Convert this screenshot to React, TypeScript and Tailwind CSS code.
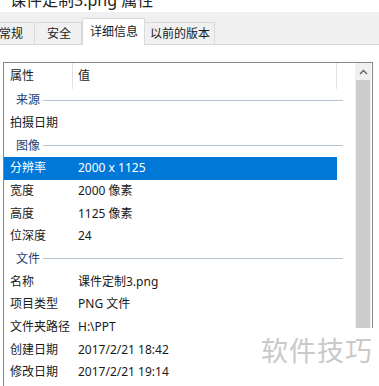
const rows: { type: "group" | "row"; label: string; value?: string; selected?: boolean }[] = [
  { type: "group", label: "来源" },
  { type: "row", label: "拍摄日期", value: "" },
  { type: "group", label: "图像" },
  { type: "row", label: "分辨率", value: "2000 x 1125", selected: true },
  { type: "row", label: "宽度", value: "2000 像素" },
  { type: "row", label: "高度", value: "1125 像素" },
  { type: "row", label: "位深度", value: "24" },
  { type: "group", label: "文件" },
  { type: "row", label: "名称", value: "课件定制3.png" },
  { type: "row", label: "项目类型", value: "PNG 文件" },
  { type: "row", label: "文件夹路径", value: "H:\\PPT" },
  { type: "row", label: "创建日期", value: "2017/2/21 18:42" },
  { type: "row", label: "修改日期", value: "2017/2/21 19:14" },
];

const tabs = [
  { label: "常规", w: "w-[47px]", pl: "pl-[10px]" },
  { label: "安全", w: "w-[47px]", pl: "pl-[12px]" },
  { label: "详细信息", w: "w-[63px]", pl: "pl-[7px]", active: true },
  { label: "以前的版本", w: "w-[70px]", pl: "pl-[5px]" },
];

export default function App() {
  return (
    <div className="relative w-[379px] h-[386px] overflow-hidden bg-white text-[#1a1a1a] font-['Noto_Sans','Noto_Sans_CJK_SC',sans-serif]">
      {/* window title, cut off at the top */}
      <div className="h-[12px] overflow-hidden">
        <div className="-mt-[10px] pl-[10px] text-[16px] leading-[20px] text-[#222]">课件定制3.png 属性</div>
      </div>

      {/* tab strip */}
      <div className="h-[33px] bg-[#f0f0f0] border-b border-[#d9d9d9] flex items-end">
        <div className="flex items-end -ml-[12px]">
          {tabs.map((t) =>
            t.active ? (
              <div
                key={t.label}
                className={`${t.w} ${t.pl} h-[27px] -mb-px bg-white border border-b-0 border-[#d9d9d9] text-[12px] leading-[24px] pt-[1px]`}
              >
                {t.label}
              </div>
            ) : (
              <div
                key={t.label}
                className={`${t.w} ${t.pl} h-[22px] bg-[#f0f0f0] border border-b-0 border-l-0 first:border-l border-[#d9d9d9] text-[12px] leading-[22px]`}
              >
                {t.label}
              </div>
            )
          )}
        </div>
      </div>

      {/* list view */}
      <div className="mt-[17px] ml-[3px] w-[370px] h-[330px] border border-b-0 border-[#828790] flex">
        <div className="w-[351px]">
          <div className="flex h-[26px] text-[12px]">
            <div className="w-[69px] pl-[6px] leading-[26px] border-r border-[#e3e3e3]">属性</div>
            <div className="w-[264px] pl-[5px] leading-[26px] border-r border-[#e3e3e3]">值</div>
          </div>
          {rows.map((r, i) =>
            r.type === "group" ? (
              <div key={i} className="h-[22.67px] flex items-center text-[12px]">
                <span className="pl-[12px] text-[#1e3f75]">{r.label}</span>
                <div className="flex-1 h-px bg-[#b9c4d3] ml-[3px] mr-[12px]" />
              </div>
            ) : (
              <div
                key={i}
                className={`h-[22.67px] w-[333px] flex items-center text-[12px] ${
                  r.selected ? "bg-[#0078d7] text-white" : ""
                }`}
              >
                <span className="w-[74px] pl-[6px] whitespace-nowrap">{r.label}</span>
                <span className="whitespace-nowrap">{r.value}</span>
              </div>
            )
          )}
        </div>
        {/* scrollbar */}
        <div className="w-[16px] flex flex-col">
          <div className="h-[17px] bg-[#f0f0f0] flex items-center justify-center">
            <svg width="9" height="6" viewBox="0 0 9 6">
              <path d="M1 5 L4.5 1.5 L8 5" stroke="#606060" strokeWidth="1.4" fill="none" />
            </svg>
          </div>
          <div className="flex-1 bg-[#f0f0f0] px-[1px]">
            <div className="h-full bg-[#cdcdcd]" />
          </div>
        </div>
      </div>

      {/* watermark */}
      <div className="absolute left-[232px] top-[328px] right-0 bottom-0 bg-white">
        <div className="absolute right-[6px] top-[4px] text-[27px] leading-[36px] tracking-[1px] text-[#c9c9c9] font-['Noto_Sans_CJK_SC',sans-serif]">
          软件技巧
        </div>
      </div>
    </div>
  );
}
